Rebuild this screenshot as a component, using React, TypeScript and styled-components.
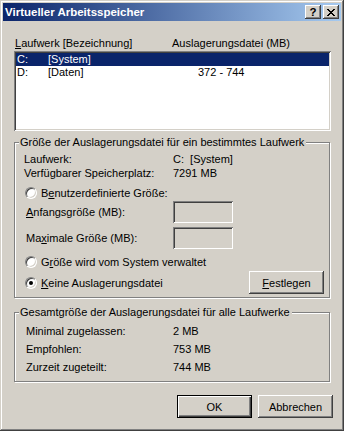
import React from 'react';
import styled, { createGlobalStyle } from 'styled-components';

const GlobalStyle = createGlobalStyle`
  html, body { margin: 0; padding: 0; background: #D4D0C8; }
  body { font-family: "Liberation Sans", Arial, sans-serif; font-size: 11px; color: #000; }
  * { box-sizing: border-box; }
`;

const raised = `box-shadow: inset -1px -1px #404040, inset 1px 1px #ffffff, inset -2px -2px #808080, inset 2px 2px #D4D0C8;`;
const sunken = `box-shadow: inset 1px 1px #808080, inset -1px -1px #ffffff, inset 2px 2px #404040, inset -2px -2px #D4D0C8;`;

const Window = styled.div`
  width: 344px;
  height: 431px;
  padding: 3px;
  background: #D4D0C8;
  box-shadow: inset -1px -1px #404040, inset 1px 1px #D4D0C8, inset -2px -2px #808080, inset 2px 2px #ffffff;
  display: flex;
  flex-direction: column;
`;

const TitleBar = styled.div`
  height: 18px;
  flex: none;
  background: linear-gradient(to right, #0A246A, #A6CAF0);
  display: flex;
  align-items: center;
  padding: 0 2px;
`;

const TitleText = styled.div`
  flex: 1;
  color: #fff;
  font-weight: bold;
  font-size: 11.5px;
  line-height: 14px;
  white-space: nowrap;
`;

const CaptionButton = styled.div<{ $gap?: boolean }>`
  width: 16px;
  height: 14px;
  background: #D4D0C8;
  ${raised}
  display: flex;
  align-items: center;
  justify-content: center;
  margin-left: ${p => (p.$gap ? '2px' : '0')};
  font-weight: bold;
  font-size: 11.5px;
  line-height: 12px;
  padding-bottom: 1px;
`;

const Panel = styled.div`
  display: flex;
  flex-direction: column;
  padding: 0 11px 0 11px;
`;

const ColumnHeader = styled.div`
  display: grid;
  grid-template-columns: 157px 1fr;
  height: 13px;
  line-height: 13px;
  margin-top: 16px;
  padding-left: 1px;
  white-space: nowrap;
`;

const ListBox = styled.div`
  margin-top: 1px;
  margin-right: -1px;
  height: 80px;
  background: #fff;
  padding: 2px;
  ${sunken}
`;

const ListItem = styled.div<{ $selected?: boolean }>`
  display: grid;
  grid-template-columns: 31px 150px 1fr;
  height: 13px;
  line-height: 13px;
  padding-left: 1px;
  white-space: nowrap;
  background: ${p => (p.$selected ? '#0A246A' : 'transparent')};
  color: ${p => (p.$selected ? '#fff' : '#000')};
`;

const Group = styled.div<{ $mt: number; $pad: string }>`
  position: relative;
  margin-top: ${p => p.$mt}px;
  border: 1px solid #808080;
  box-shadow: inset 1px 1px #ffffff, 1px 1px #ffffff;
  display: flex;
  flex-direction: column;
  padding: ${p => p.$pad};
`;

const Caption = styled.span`
  position: absolute;
  top: -7px;
  left: 4px;
  padding: 0 2px 0 1px;
  background: #D4D0C8;
  line-height: 13px;
  white-space: nowrap;
`;

const InfoRow = styled.div<{ $h: number; $mt?: number; $col: number }>`
  display: grid;
  grid-template-columns: ${p => p.$col}px 1fr;
  align-items: center;
  height: ${p => p.$h}px;
  margin-top: ${p => p.$mt ?? 0}px;
  white-space: nowrap;
`;

const SubLabel = styled.span`
  padding-left: 2px;
`;

const RadioLine = styled.div<{ $h: number; $mt?: number }>`
  display: flex;
  align-items: center;
  gap: 4px;
  height: ${p => p.$h}px;
  margin-top: ${p => p.$mt ?? 0}px;
  padding-left: 1px;
  white-space: nowrap;
`;

const RadioCircle = styled.span<{ $checked?: boolean }>`
  width: 12px;
  height: 12px;
  flex: none;
  border-radius: 50%;
  border: 1px solid;
  border-color: #808080 #ffffff #ffffff #808080;
  background: #fff;
  box-shadow: inset 1px 1px #404040, inset -1px -1px #D4D0C8;
  display: flex;
  align-items: center;
  justify-content: center;
  &::after {
    content: '';
    width: 4px;
    height: 4px;
    border-radius: 50%;
    background: ${p => (p.$checked ? '#000' : 'transparent')};
  }
`;

const EditBox = styled.div`
  width: 60px;
  height: 22px;
  background: #D4D0C8;
  ${sunken}
`;

const ActionRow = styled.div`
  display: flex;
  align-items: center;
  justify-content: space-between;
  height: 23px;
  margin-top: 1px;
`;

const Button = styled.div<{ $default?: boolean }>`
  width: 75px;
  height: 23px;
  display: flex;
  align-items: center;
  justify-content: center;
  background: #D4D0C8;
  white-space: nowrap;
  ${p =>
    p.$default
      ? `border: 1px solid #000; box-shadow: inset 1px 1px #ffffff, inset -1px -1px #404040, inset -2px -2px #808080;`
      : raised}
`;

const ButtonRow = styled.div`
  display: flex;
  justify-content: flex-end;
  gap: 6px;
  margin-top: 13px;
  padding-right: 8px;
`;

const CloseGlyph = () => {
  const rows: [number, number][][] = [
    [[0, 2], [6, 2]],
    [[1, 2], [5, 2]],
    [[2, 4]],
    [[3, 2]],
    [[2, 4]],
    [[1, 2], [5, 2]],
    [[0, 2], [6, 2]],
  ];
  return (
    <svg width="8" height="7" viewBox="0 0 8 7" shapeRendering="crispEdges" style={{ marginTop: 1 }}>
      {rows.map((r, y) => r.map(([x, w], i) => <rect key={`${y}-${i}`} x={x} y={y} width={w} height={1} fill="#000" />))}
    </svg>
  );
};

export default function App() {
  return (
    <>
      <GlobalStyle />
      <Window>
        <TitleBar>
          <TitleText>Virtueller Arbeitsspeicher</TitleText>
          <CaptionButton>?</CaptionButton>
          <CaptionButton $gap>
            <CloseGlyph />
          </CaptionButton>
        </TitleBar>
        <Panel>
          <ColumnHeader>
            <span>
              <u>L</u>aufwerk [Bezeichnung]
            </span>
            <span>Auslagerungsdatei (MB)</span>
          </ColumnHeader>
          <ListBox>
            <ListItem $selected>
              <span>C:</span>
              <span>[System]</span>
              <span></span>
            </ListItem>
            <ListItem>
              <span>D:</span>
              <span>[Daten]</span>
              <span>372 - 744</span>
            </ListItem>
          </ListBox>

          <Group $mt={11} $pad="9px 5px 3px 9px">
            <Caption>Größe der Auslagerungsdatei für ein bestimmtes Laufwerk</Caption>
            <InfoRow $h={14} $col={149}>
              <span>Laufwerk:</span>
              <span>C:&nbsp; [System]</span>
            </InfoRow>
            <InfoRow $h={14} $col={149}>
              <span>Verfügbarer Speicherplatz:</span>
              <span>7291 MB</span>
            </InfoRow>
            <RadioLine $h={16} $mt={5}>
              <RadioCircle />
              <span>
                B<u>e</u>nutzerdefinierte Größe:
              </span>
            </RadioLine>
            <InfoRow $h={22} $col={149}>
              <SubLabel>
                <u>A</u>nfangsgröße (MB):
              </SubLabel>
              <EditBox />
            </InfoRow>
            <InfoRow $h={22} $mt={4} $col={149}>
              <SubLabel>
                Ma<u>x</u>imale Größe (MB):
              </SubLabel>
              <EditBox />
            </InfoRow>
            <RadioLine $h={16} $mt={5}>
              <RadioCircle />
              <span>
                G<u>r</u>öße wird vom System verwaltet
              </span>
            </RadioLine>
            <ActionRow>
              <RadioLine $h={16}>
                <RadioCircle $checked />
                <span>
                  <u>K</u>eine Auslagerungsdatei
                </span>
              </RadioLine>
              <Button>
                <span>
                  <u>F</u>estlegen
                </span>
              </Button>
            </ActionRow>
          </Group>

          <Group $mt={14} $pad="9px 5px 5px 11px">
            <Caption>Gesamtgröße der Auslagerungsdatei für alle Laufwerke</Caption>
            <InfoRow $h={18} $col={147}>
              <span>Minimal zugelassen:</span>
              <span>2 MB</span>
            </InfoRow>
            <InfoRow $h={18} $col={147}>
              <span>Empfohlen:</span>
              <span>753 MB</span>
            </InfoRow>
            <InfoRow $h={18} $col={147}>
              <span>Zurzeit zugeteilt:</span>
              <span>744 MB</span>
            </InfoRow>
          </Group>
        </Panel>
        <ButtonRow>
          <Button $default>OK</Button>
          <Button>Abbrechen</Button>
        </ButtonRow>
      </Window>
    </>
  );
}
